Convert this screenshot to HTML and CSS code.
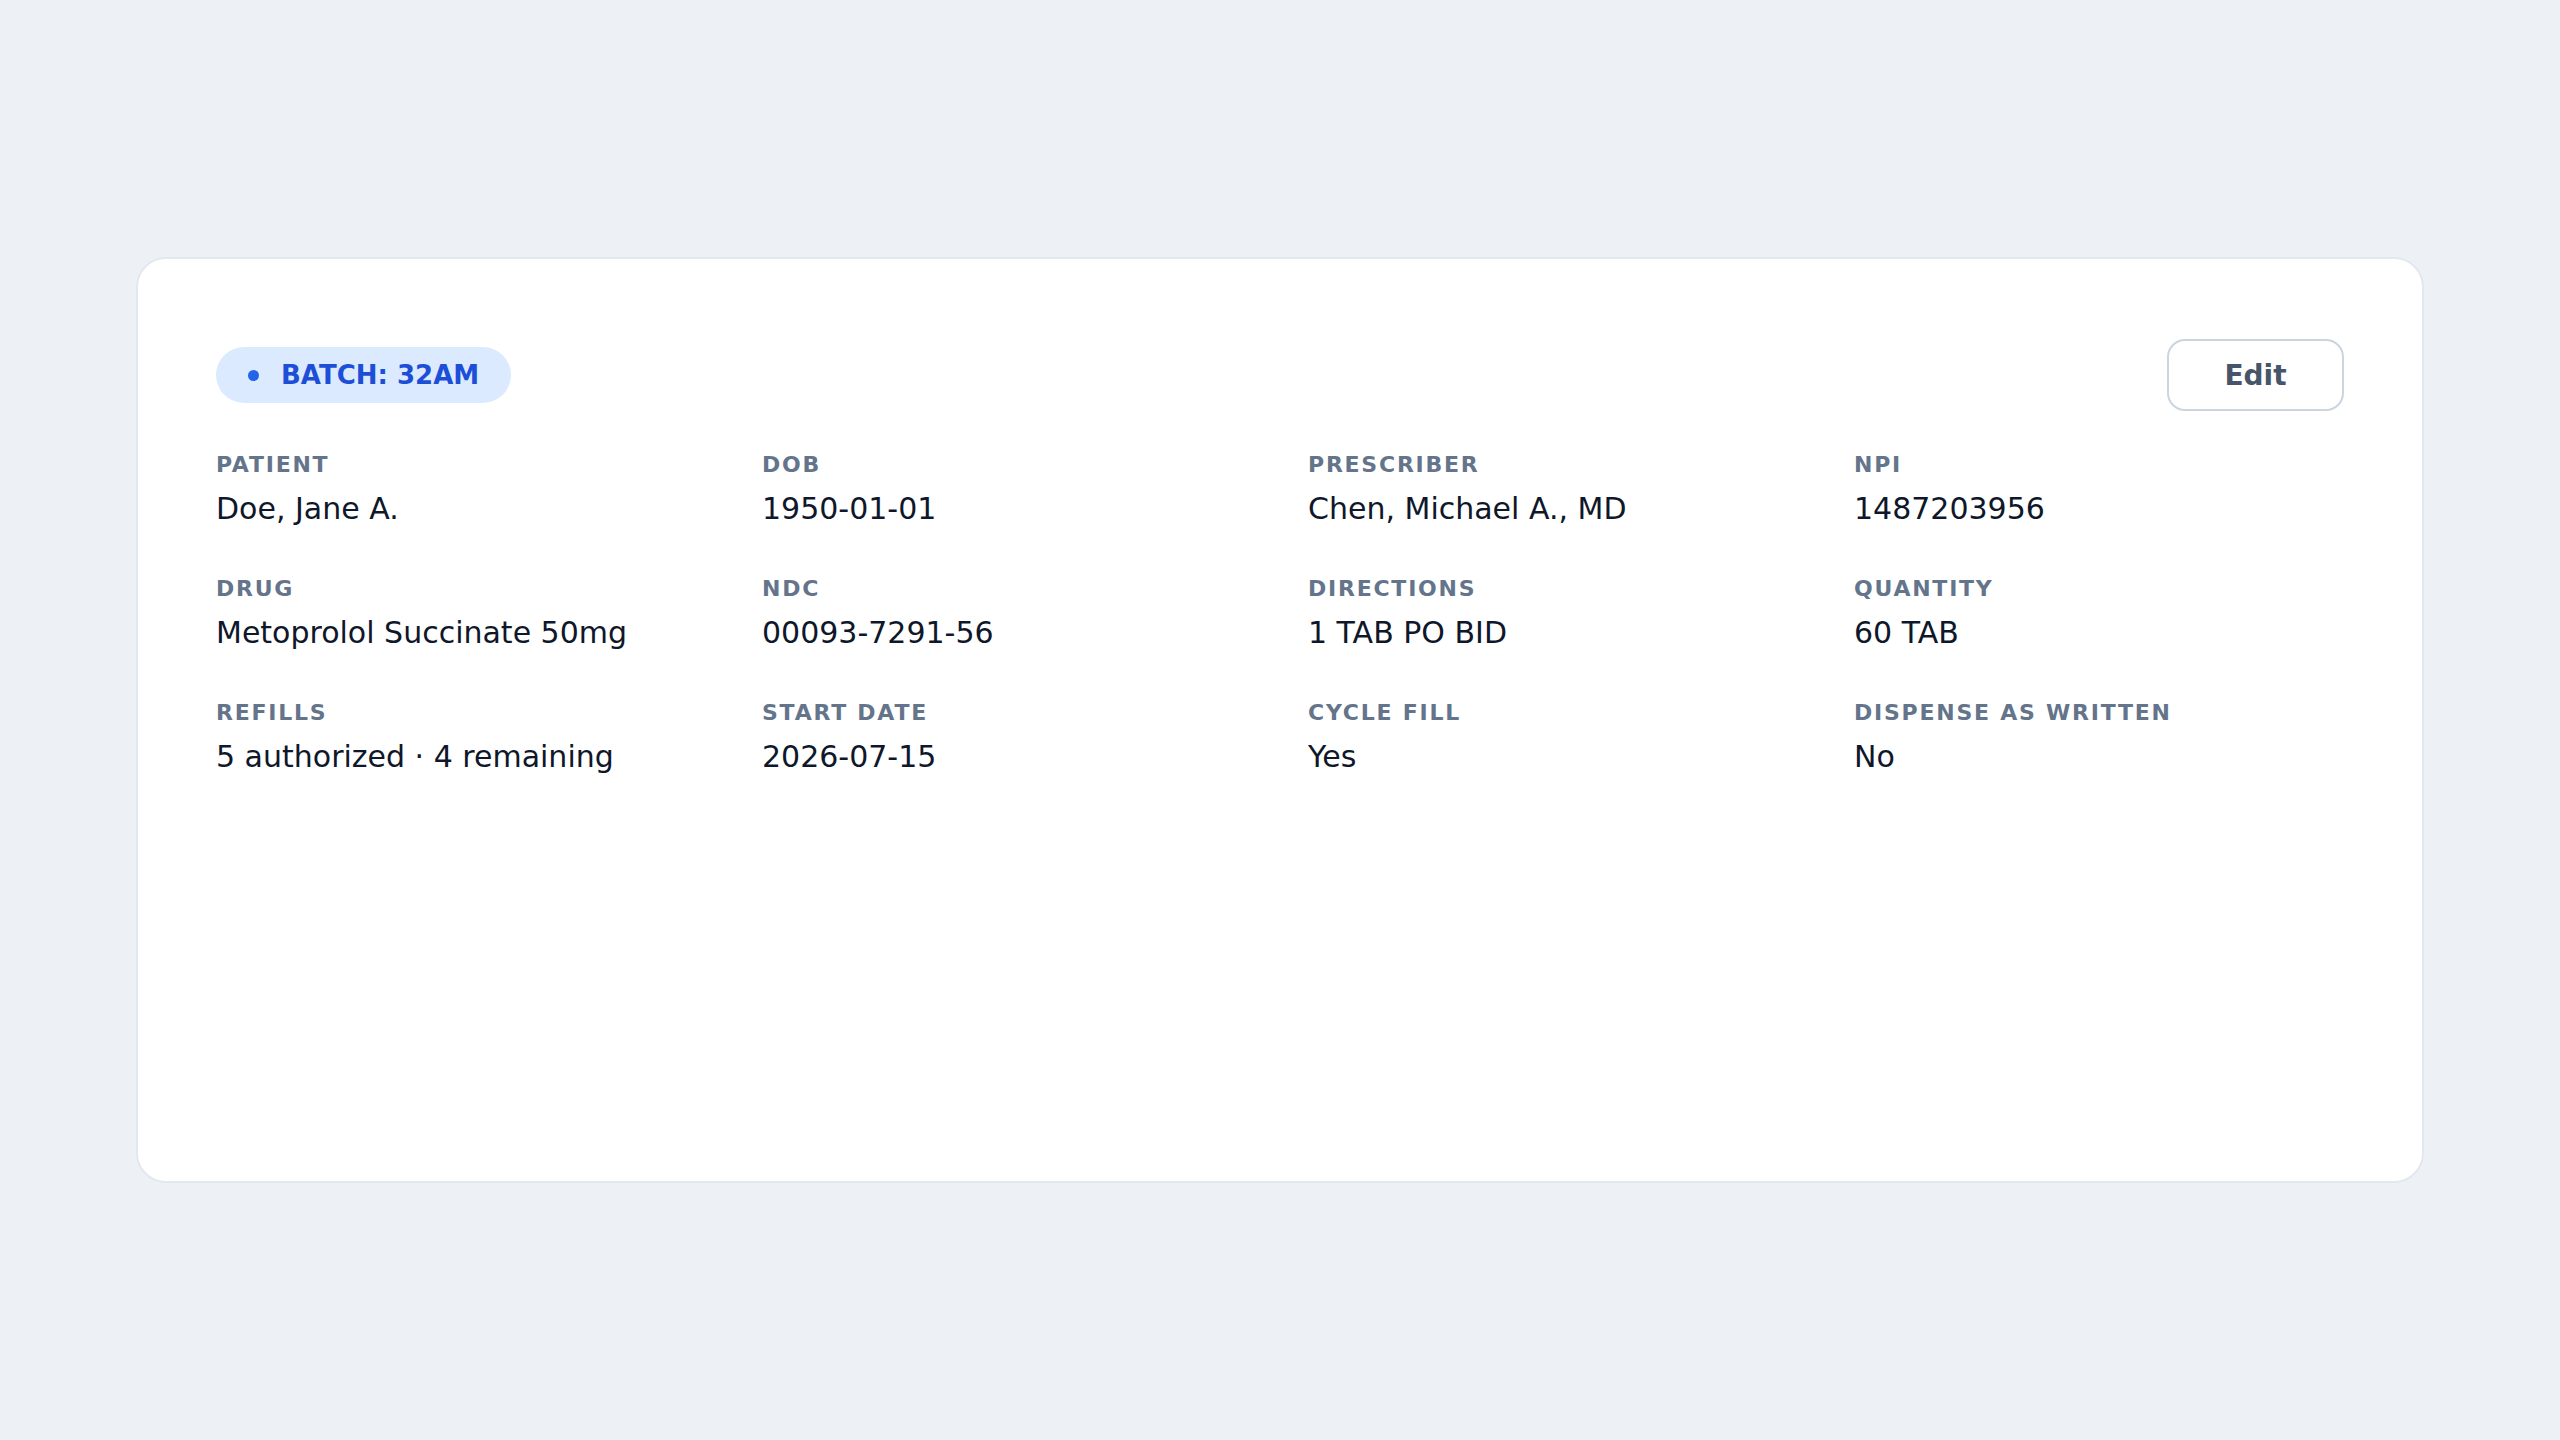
FILE: index.html
```html
<!DOCTYPE html>
<html lang="en">
<head>
    <meta charset="UTF-8">
    <title>Prescription</title>
    <link rel="stylesheet" href="styles.css">
</head>
<body>
    <div class="rx-card">
        <div class="rx-header">
            <span class="batch-pill"><span class="batch-dot"></span>BATCH: 32AM</span>
            <button class="edit-btn" type="button">Edit</button>
        </div>

        <div class="rx-grid">
            <div class="field"><div class="field-label">Patient</div><div class="field-value">Doe, Jane A.</div></div>
            <div class="field"><div class="field-label">DOB</div><div class="field-value">1950-01-01</div></div>
            <div class="field"><div class="field-label">Prescriber</div><div class="field-value">Chen, Michael A., MD</div></div>
            <div class="field"><div class="field-label">NPI</div><div class="field-value">1487203956</div></div>

            <div class="field"><div class="field-label">Drug</div><div class="field-value">Metoprolol Succinate 50mg</div></div>
            <div class="field"><div class="field-label">NDC</div><div class="field-value">00093-7291-56</div></div>
            <div class="field"><div class="field-label">Directions</div><div class="field-value">1 TAB PO BID</div></div>
            <div class="field"><div class="field-label">Quantity</div><div class="field-value">60 TAB</div></div>

            <div class="field"><div class="field-label">Refills</div><div class="field-value">5 authorized · 4 remaining</div></div>
            <div class="field"><div class="field-label">Start Date</div><div class="field-value">2026-07-15</div></div>
            <div class="field"><div class="field-label">Cycle Fill</div><div class="field-value">Yes</div></div>
            <div class="field"><div class="field-label">Dispense as Written</div><div class="field-value">No</div></div>
        </div>
    </div>
</body>
</html>
```

FILE: styles.css
```css
body {
    font-family: 'DejaVu Sans', Verdana, sans-serif;
    background-color: #edf1f6;
    margin: 0;
    min-height: 100vh;
    display: flex;
    align-items: center;
    justify-content: center;
    color: #0f172a;
}

.rx-card {
    box-sizing: border-box;
    width: 2288px;
    min-height: 926px;
    background-color: #fff;
    border: 2px solid #e2e8f0;
    border-radius: 30px;
    padding: 80px 78px 78px;
}

.rx-header {
    display: flex;
    justify-content: space-between;
    align-items: center;
    height: 72px;
    margin-bottom: 41px;
}

.batch-pill {
    display: inline-flex;
    align-items: center;
    gap: 22px;
    height: 56px;
    padding: 0 32px;
    border-radius: 28px;
    background-color: #dbeafe;
    color: #1d4ed8;
    font-size: 26px;
    font-weight: 700;
}

.batch-dot {
    width: 11px;
    height: 11px;
    border-radius: 50%;
    background-color: #2563eb;
}

.edit-btn {
    box-sizing: border-box;
    width: 177px;
    height: 72px;
    font-family: inherit;
    font-size: 28px;
    font-weight: 700;
    color: #475569;
    background-color: #fff;
    border: 2px solid #cbd5e1;
    border-radius: 18px;
}

.rx-grid {
    display: grid;
    grid-template-columns: repeat(4, 1fr);
    column-gap: 56px;
    row-gap: 46px;
}

.field-label {
    font-size: 22px;
    line-height: 26px;
    font-weight: 700;
    letter-spacing: 0.08em;
    text-transform: uppercase;
    color: #64748b;
    margin-bottom: 10px;
}

.field-value {
    font-size: 30px;
    line-height: 42px;
}
```
